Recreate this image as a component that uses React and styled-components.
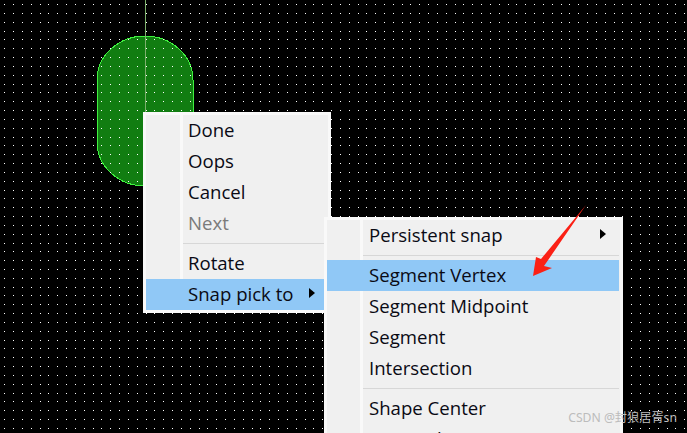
import styled, { createGlobalStyle } from "styled-components";

const Global = createGlobalStyle`
  html, body {
    margin: 0;
    padding: 0;
    background: #000;
  }
`;

const Canvas = styled.div`
  position: relative;
  width: 687px;
  height: 433px;
  overflow: hidden;
  background: #000;
  font-family: "Open Sans", "Noto Sans", sans-serif;
  font-size: 18.6px;
  color: #0a0a14;
`;

const Board = styled.svg`
  position: absolute;
  inset: 0;
`;

// the menus float over the board, so they keep their place with left / top
const Menu = styled.div`
  position: absolute;
  left: ${(p) => p.$left}px;
  top: ${(p) => p.$top}px;
  width: ${(p) => p.$width}px;
  box-sizing: border-box;
  display: flex;
  flex-direction: column;
  padding-right: 1px;
  border: 3px solid #f9f9f9;
  background: linear-gradient(#f9f9f9, #f9f9f9) ${(p) => p.$gutter}px 0 / 3px 100% no-repeat, #f0f0f0;
`;

const Row = styled.div`
  display: flex;
  align-items: center;
  justify-content: space-between;
  box-sizing: border-box;
  height: 31px;
  padding: 0 ${(p) => p.$caretGap}px 3px 42px;
  white-space: nowrap;
  background: ${(p) => (p.$active ? "#90c8f6" : "transparent")};
  color: ${(p) => (p.$disabled ? "#7b7b7b" : "inherit")};
`;

const Separator = styled.div`
  height: 1px;
  margin: 4px 0 4px ${(p) => p.$indent}px;
  background: #d7d7d7;
`;

const Caret = styled.span`
  width: 0;
  height: 0;
  border-left: 6px solid #000;
  border-top: 5px solid transparent;
  border-bottom: 5px solid transparent;
`;

const Arrow = styled.svg`
  position: absolute;
  inset: 0;
`;

const Watermark = styled.div`
  position: absolute;
  right: 10px;
  bottom: 7px;
  font-size: 12.2px;
  font-family: "Noto Sans", "Noto Sans CJK SC", sans-serif;
  color: #bcbcbc;
  white-space: nowrap;
`;

function dotPath() {
  let d = "";
  for (let i = 0; i < 78; i++) {
    for (let j = 0; j < 50; j++) {
      const x = Math.round(4.3 + i * 8.83);
      const y = Math.round(4.1 + j * 8.83);
      d += `M${x} ${y}h1v1h-1z`;
    }
  }
  return d;
}

const mainItems = [
  { label: "Done" },
  { label: "Oops" },
  { label: "Cancel" },
  { label: "Next", disabled: true },
  { sep: true },
  { label: "Rotate" },
  { label: "Snap pick to", active: true, sub: true },
];

const subItems = [
  { label: "Persistent snap", sub: true },
  { sep: true },
  { label: "Segment Vertex", active: true },
  { label: "Segment Midpoint" },
  { label: "Segment" },
  { label: "Intersection" },
  { sep: true },
  { label: "Shape Center" },
  { label: "Arc/Circle Center" },
];

function MenuList({ items, left, top, width, gutter, caretGap }) {
  return (
    <Menu $left={left} $top={top} $width={width} $gutter={gutter}>
      {items.map((item, i) =>
        item.sep ? (
          <Separator key={i} $indent={gutter + 3} />
        ) : (
          <Row key={i} $caretGap={caretGap} $active={item.active} $disabled={item.disabled}>
            {item.label}
            {item.sub && <Caret />}
          </Row>
        )
      )}
    </Menu>
  );
}

export default function App() {
  return (
    <Canvas>
      <Global />
      <Board width="687" height="433">
        <rect x="97" y="36" width="96" height="150" rx="48" ry="44" fill="#117d11" stroke="#3ff03f" strokeWidth="1" shapeRendering="crispEdges" />
        <path d={dotPath()} fill="#fff" shapeRendering="crispEdges" />
        <rect x="145" y="0" width="1" height="115" fill="#7db06d" />
      </Board>
      <MenuList items={mainItems} left={143} top={112} width={188} gutter={34} caretGap={12} />
      <MenuList items={subItems} left={324} top={217} width={299} gutter={33} caretGap={13} />
      <Arrow width="687" height="433">
        <path d="M586 205 L541 259 L536 257 L533 276 L552 268 L544 266 Z" fill="#fb2015" />
      </Arrow>
      <Watermark>CSDN @封狼居胥sn</Watermark>
    </Canvas>
  );
}
